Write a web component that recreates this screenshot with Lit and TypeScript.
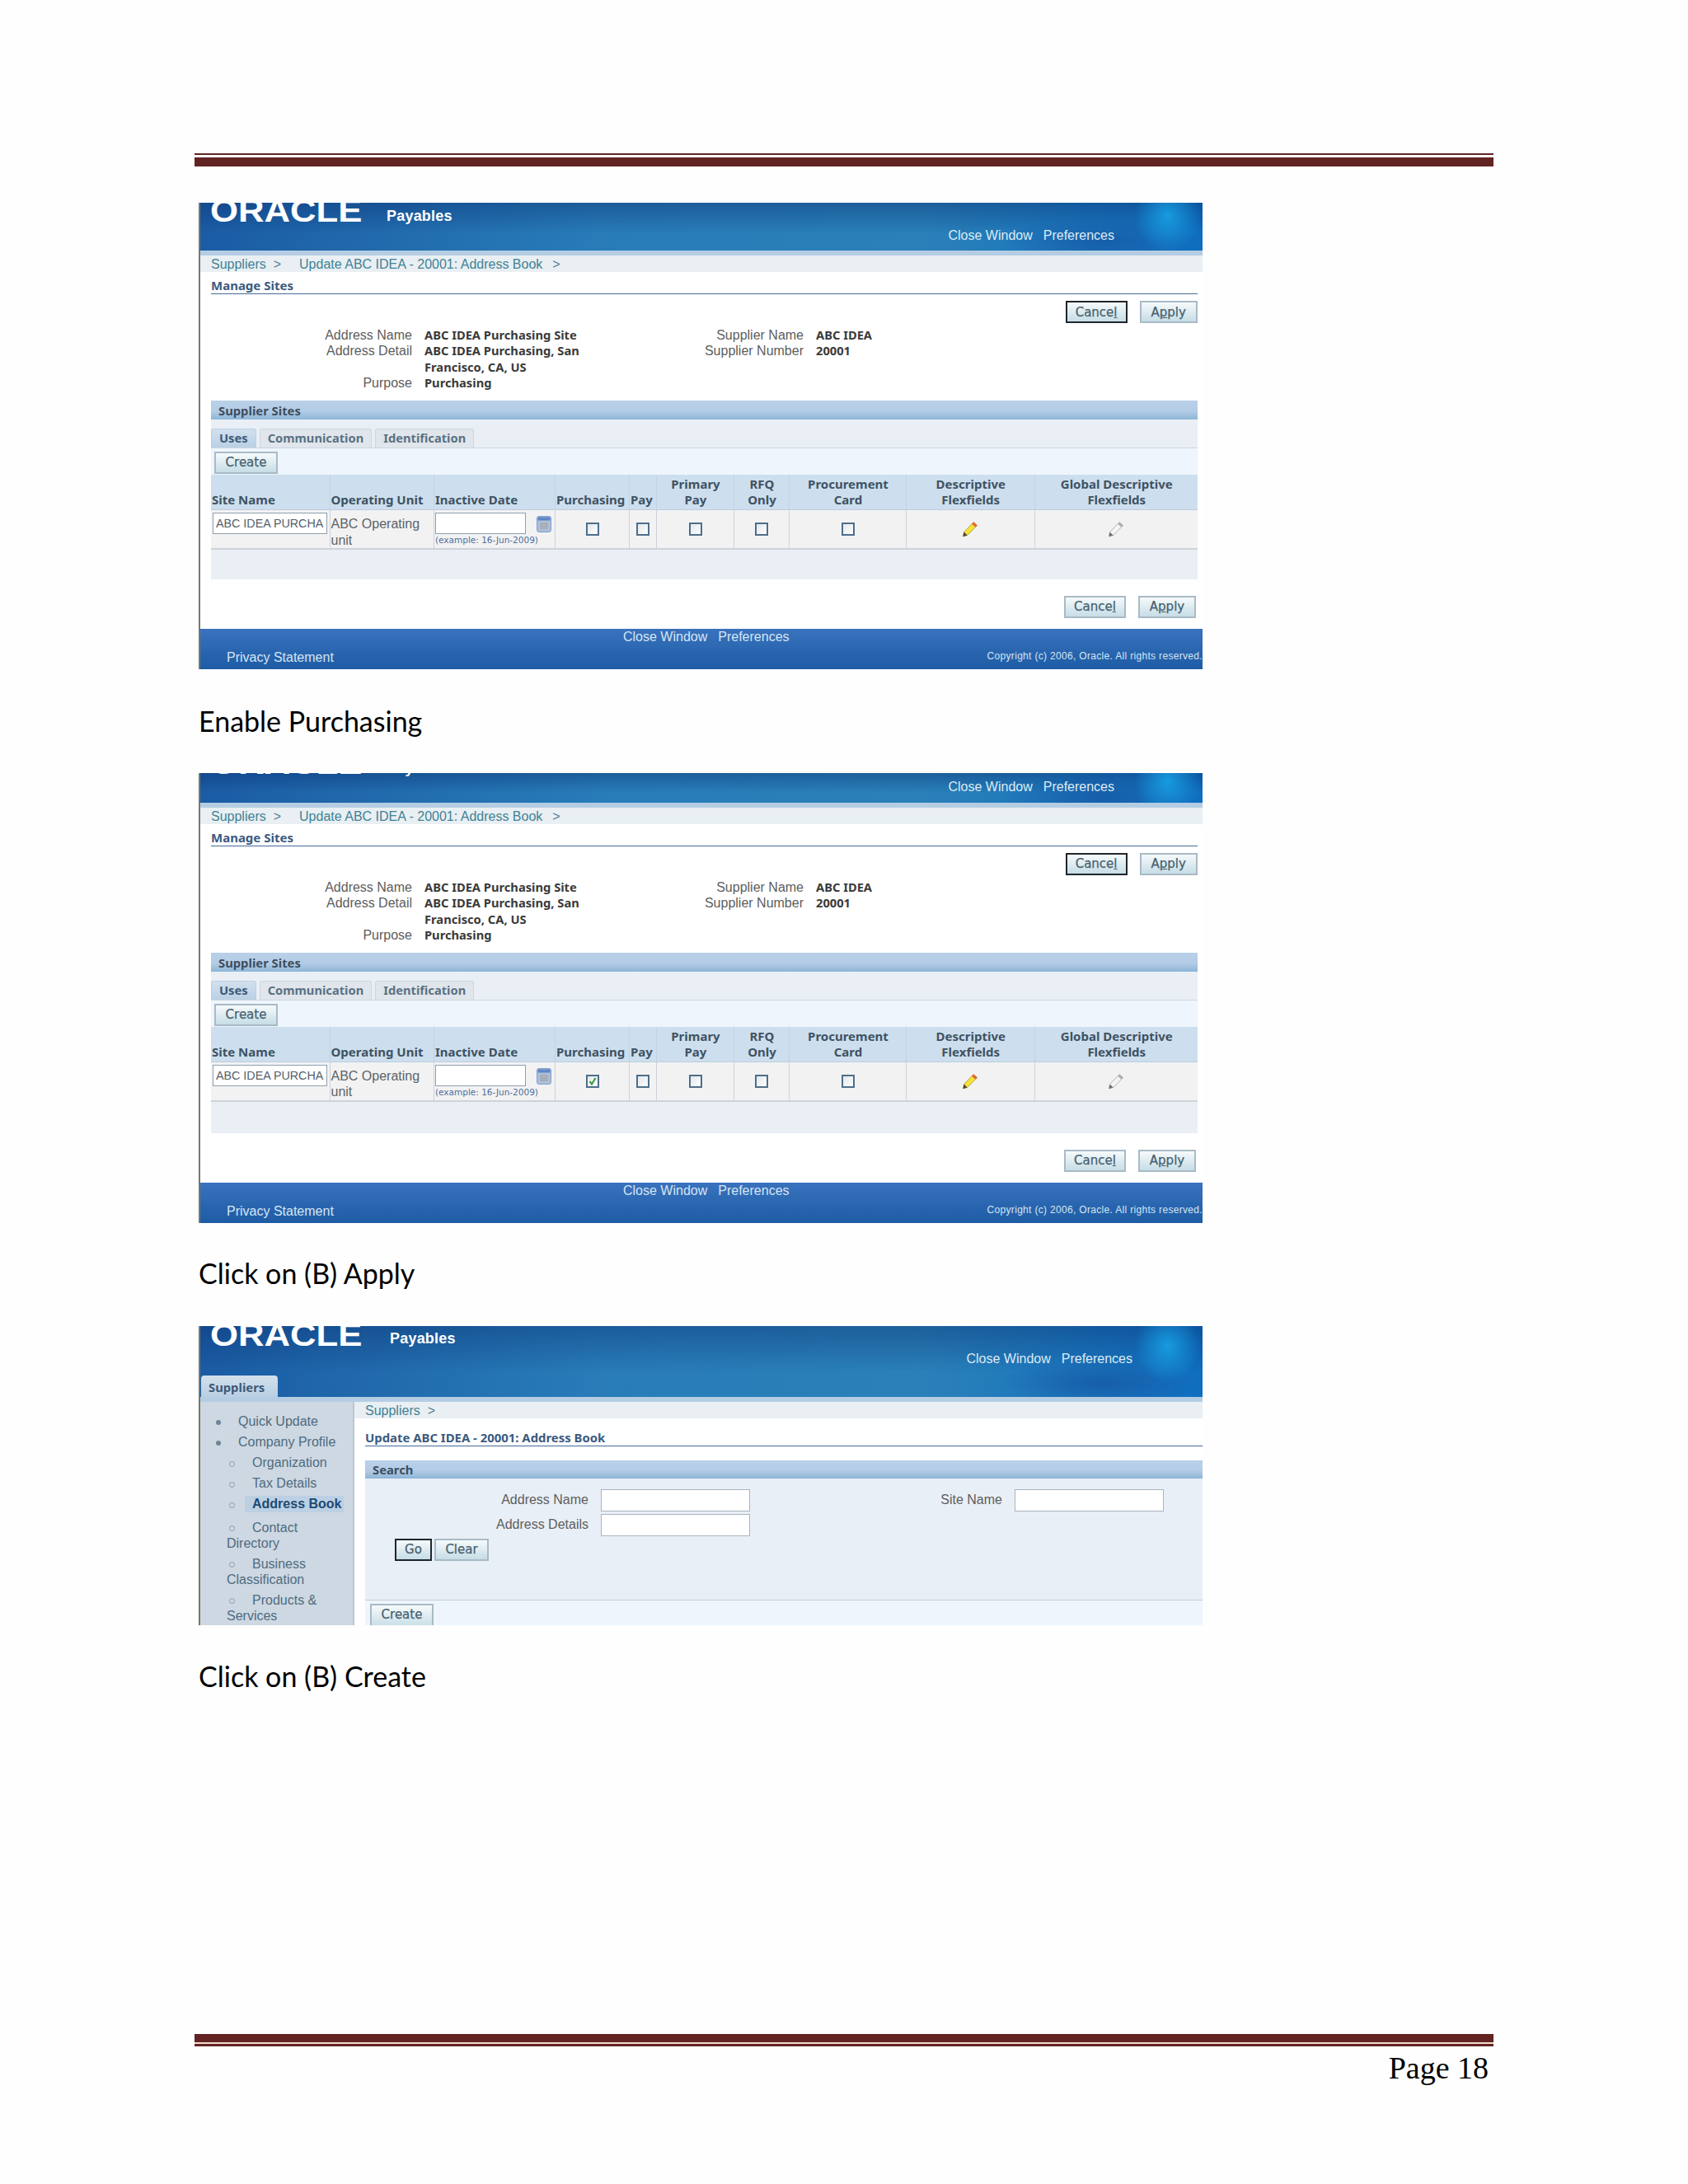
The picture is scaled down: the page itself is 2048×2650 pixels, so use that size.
import { LitElement, html, css, svg } from "lit";
import { customElement } from "lit/decorators.js";

const pencil = (body: string, edge: string, cap: string, tip: string) => html`<svg class="pencil" viewBox="0 0 20 20">
  <path d="M14.2 1.6 L18.6 5.6 L6.6 17.6 L1.4 19 L2.6 13.4 Z" fill="${body}" stroke="${edge}" stroke-width=".8"/>
  <path d="M14.2 1.6 L18.6 5.6 L16.4 7.8 L12 3.8 Z" fill="${cap}"/>
  <path d="M2.6 13.4 L1.4 19 L6.6 17.6 Z" fill="${tip}"/>
</svg>`;

const calendar = html`<svg class="cal" viewBox="0 0 18 20">
  <rect x=".5" y=".5" width="17" height="19" rx="2.5" fill="#a9bfe0" stroke="#7f9fd0"/>
  <rect x="1.5" y="1.5" width="15" height="4" fill="#5f86c4"/>
  <rect x="3" y="7" width="12" height="10" fill="#c6ced8"/>
  ${[9, 11, 13, 15].map((y) => svg`<path d="M3 ${y} H15" stroke="#8b96a3" stroke-width=".7"/>`)}
  ${[5.4, 7.8, 10.2, 12.6].map((x) => svg`<path d="M${x} 7 V17" stroke="#8b96a3" stroke-width=".7"/>`)}
</svg>`;

@customElement("app-root")
export class AppRoot extends LitElement {
  static styles = css`
    :host { display: block; width: 2048px; height: 2650px; background: #fefefe; overflow: hidden; }
    .page { box-sizing: border-box; width: 2048px; height: 2650px; padding: 186px 0 0 236px; font-family: "Liberation Sans", Arial, sans-serif; color: #555; }

    .rule-top, .rule-bot { width: 1576px; }
    .r-thin { height: 2px; background: #622423; }
    .r-thick { height: 11px; background: #622423; }
    .r-gap { height: 3px; background: #fff; }
    .rule-bot .r-thick { height: 10px; }
    .rule-bot .r-gap { height: 2px; background: #f3ddd0; }
    .rule-bot .r-thin { height: 3px; }
    .rule-top { margin-bottom: 44px; }

    .caption { margin-left: 5px; font-family: Lato, sans-serif; font-size: 34px; line-height: 40px; color: #000; }
    .c1 { margin-top: 42.8px; margin-bottom: 43.2px; }
    .c2 { margin-top: 41px; margin-bottom: 44px; }
    .c3 { margin-top: 41.8px; margin-bottom: 414.2px; }
    .pageno { width: 1570px; margin-top: 4px; text-align: right; font-family: "Liberation Serif", serif; font-size: 38px; line-height: 44px; color: #000; }

    .shot { box-sizing: border-box; margin-left: 5px; width: 1218px; border-left: 2px solid #77776c; background: #fff; overflow: hidden; }

    .hdr { display: flex; flex-direction: column; justify-content: flex-end; overflow: hidden; height: 58px;
      background:
        radial-gradient(ellipse 40px 44px at 96.5% 28%, rgba(24,165,232,.85), rgba(24,165,232,0)),
        radial-gradient(ellipse 120px 30px at 90% 80%, rgba(22,84,160,.7), rgba(22,84,160,0)),
        linear-gradient(180deg, rgba(8,45,110,.4), rgba(8,45,110,0) 65%),
        linear-gradient(90deg, #1b5ca4 0%, #287cb8 40%, #2a80b8 72%, #0f6ec0 100%); }
    .hdr.short { height: 36px; }
    .hdr.tall { height: 86px; }
    .hdr-row { display: flex; align-items: flex-end; flex: none; }
    .logo { flex: none; margin: 0 24px 29px 12px; font: 700 39px/39px "Liberation Sans", sans-serif; color: #fff; transform: scaleX(1.12); transform-origin: left bottom; width: 160px; white-space: nowrap; }
    .logo sup { font-size: 8px; font-weight: 400; line-height: 0; vertical-align: 24px; margin-left: 1px; }
    .pay { flex: none; margin: 0 0 32px 30px; font: 700 18px/20px "Liberation Sans", sans-serif; color: #fff; letter-spacing: .2px; }
    .links { display: flex; gap: 13px; margin: 0 107px 8.5px auto; font-size: 16px; line-height: 20px; color: #dcebf5; }
    .tall .logo { margin-bottom: 30px; }
    .tall .pay { margin: 0 0 35px 34px; }
    .tall .links { margin: 0 85px 9.5px auto; }
    .hdr-tab { flex: none; height: 26px; }
    .tab-top { box-sizing: border-box; width: 93px; height: 26px; margin-left: 1px; padding: 4px 0 0 9px; border-radius: 4px 4px 0 0; background: linear-gradient(#d3e0ec, #b9cfe4); font: 700 14.8px/20px "Noto Sans", sans-serif; color: #3d5a76; }

    .band { height: 6px; background: #b5cde3; }
    .crumb { box-sizing: border-box; display: flex; height: 20px; padding: 1px 0 0 13px; background: #e9eff3; font-size: 16px; line-height: 20px; color: #3f8294; }
    .sep { margin: 0 22px 0 9px; color: #55788c; }
    .sep.end { margin-left: 12px; }
    .title { box-sizing: border-box; height: 27px; margin: 0 6px 0 13px; padding-top: 6.2px; border-bottom: 1.5px solid #466a96; font: 700 15px/20px "Noto Sans", sans-serif; color: #3b5a80; }
    .actions { display: flex; justify-content: flex-end; gap: 15px; padding-right: 6.4px; margin-top: 8px; }
    .actions.low { padding-right: 8px; margin: 20px 0 13px; }
    .btn { box-sizing: border-box; display: flex; align-items: center; justify-content: center; height: 27px; border: 2px solid #a9bac6; background: linear-gradient(#f6fafb, #c6dde6); font: 400 15px/20px "DejaVu Sans", sans-serif; color: #46616f; -webkit-text-stroke: .25px #46616f; }
    .btn u { text-decoration-thickness: 1px; }
    .btn.def { border-color: #20262b; }
    .w75 { width: 75px; } .w70 { width: 70px; } .w77 { width: 77px; } .w45 { width: 45px; } .w66 { width: 66px; }

    .info { display: grid; grid-template-columns: 257px 240px 205px 1fr; grid-template-rows: 19.6px 39.2px 19.6px; column-gap: 15px; margin-top: 4.65px; line-height: 19.6px; font-size: 16px; align-items: baseline; }
    .lab { text-align: right; color: #5d5d5d; }
    .val { font: 700 14.7px/19.6px "Noto Sans", sans-serif; color: #3a3a3a; }

    .sec { box-sizing: border-box; height: 23px; margin: 10.95px 6px 0 13px; padding: 2px 0 0 9px; background: linear-gradient(#b9d0e8 0%, #b4cce6 55%, #8db5d6 100%); font: 700 14.8px/20px "Noto Sans", sans-serif; color: #3c4e60; }
    .panel { box-sizing: border-box; height: 194px; margin: 0 6px 0 13px; padding-top: 11px; background: #eaeff6; }
    .panel.long { height: 196px; }
    .tabs { display: flex; gap: 4px; height: 23px; }
    .tab { box-sizing: border-box; height: 23px; padding: 1px 9px 0; border: 1px solid #cdd6df; border-bottom: 0; border-radius: 3px 3px 0 0; background: #e0e6ec; font: 700 14.7px/19px "Noto Sans", sans-serif; color: #5a7183; }
    .tab.on { background: linear-gradient(#d2e0ee, #b9d0e6); border-color: #bcd0e4; color: #3d5a76; }
    .tabc { box-sizing: border-box; height: 33px; padding: 4px 0 0 4px; border-top: 1px solid #cdd6de; background: #eef5fd; }

    .tbl { display: grid; grid-template-columns: 143.5px 126.5px 147px 90px 33px 94px 67px 142px 155.5px 198.5px; }
    .th { box-sizing: border-box; height: 43px; display: flex; align-items: flex-end; padding: 0 0 1px 1px; background: #cddfee; border-left: 1px solid #c2d4e4; border-bottom: 1px solid #bccede; font: 700 15px/19.6px "Noto Sans", sans-serif; color: #3f5263; white-space: nowrap; }
    .th:first-child { border-left: 0; }
    .th.ctr { justify-content: center; text-align: center; }
    .td { box-sizing: border-box; height: 48px; display: flex; align-items: center; justify-content: center; background: #f3f2f3; border-left: 1px solid #cdd2d8; border-bottom: 2px solid #ced3d8; }
    .td.first { border-left: 0; }
    .td.top { display: block; padding: 3px 0 0 2px; }
    .td.unit { display: block; padding: 7px 0 0 1px; font-size: 16px; line-height: 19.6px; color: #5b6368; }
    .td.date { display: grid; grid-template-columns: 110px 18px; column-gap: 13px; justify-content: start; align-content: start; padding: 3px 0 0 1px; }
    .inp { box-sizing: border-box; height: 26px; border: 1px solid #8fa0ae; background: #fff; font-size: 14.3px; line-height: 24px; padding-left: 3px; color: #55606a; white-space: nowrap; overflow: hidden; }
    .site { width: 139px; }
    .ex { grid-column: 1 / 3; margin-top: 1px; font: 400 10.5px/13px "DejaVu Sans", sans-serif; color: #4a6fa0; white-space: nowrap; }
    .cal { display: block; width: 18px; height: 20px; margin-top: 2px; }
    .cb { box-sizing: border-box; width: 16px; height: 16px; border: 2px solid #4d6f8c; background: linear-gradient(135deg, #e4e8ec, #fdfdfd); display: block; }
    .pencil { display: block; width: 20px; height: 20px; }
    .cb svg { display: block; width: 12px; height: 12px; }

    .foot { height: 49px; background: linear-gradient(#3a72bd, #1d5ca5); box-sizing: border-box; color: #d5e5f3; font-size: 15px; overflow: hidden; }
    .foot-links { display: flex; gap: 13px; padding-left: 513px; font-size: 16px; line-height: 20px; }
    .foot-row { display: flex; justify-content: space-between; margin-top: 5px; padding-left: 32px; font-size: 16px; line-height: 20px; }
    .copy { flex: none; margin-top: -2px; font-size: 12px; letter-spacing: .32px; white-space: nowrap; }

    .body3 { display: flex; height: 271px; }
    .nav { box-sizing: border-box; flex: none; width: 187px; padding-top: 14.5px; background: #cdd8e2; border-right: 2px solid #bac7d3; font-size: 16px; line-height: 19px; color: #4f6b80; }
    .it { margin-bottom: 6px; }
    .l1 { padding-left: 19px; }
    .l2 { padding-left: 32px; padding-right: 10px; }
    .blt { display: inline-block; vertical-align: middle; }
    .b1 { width: 27px; }
    .b2 { width: 31px; }
    .b3 { width: 22px; }
    .blt i { display: block; width: 6px; height: 6px; border-radius: 50%; background: #6e8499; }
    .b2 i, .b3 i { box-sizing: border-box; width: 7px; height: 7px; margin-left: 3px; background: transparent; border: 1.5px solid #8a9dab; }
    .it.act { margin: 3px 0 8.5px; }
    .hl { display: inline-block; width: 120px; padding: 0 0 1px 9px; box-sizing: border-box; background: #bcd0e4; font-weight: 700; color: #1d4a73; white-space: nowrap; }
    .main3 { flex: 1; min-width: 0; }
    .title3 { box-sizing: border-box; height: 34px; margin-left: 13px; padding-top: 13.2px; border-bottom: 1.5px solid #466a96; font: 700 14.9px/20px "Noto Sans", sans-serif; color: #3b5a80; white-space: nowrap; }
    .sec3 { box-sizing: border-box; height: 22px; margin: 17px 0 0 13px; padding: 1px 0 0 9px; background: linear-gradient(#b9d0e8 0%, #b4cce6 55%, #8db5d6 100%); font: 700 14.8px/20px "Noto Sans", sans-serif; color: #3c4e60; }
    .search { box-sizing: border-box; height: 148px; margin-left: 13px; padding-top: 13px; background: #e9eff6; border-bottom: 1px solid #c6cdd3; }
    .sgrid { display: grid; grid-template-columns: 271px 181px 291px 181px; column-gap: 15px; row-gap: 3px; align-items: center; font-size: 16px; }
    .sgrid .inp { height: 27px; border: 1.5px solid #a9b4bd; }
    .goes { display: flex; gap: 3px; margin: 3px 0 0 36px; }
    .createbar { box-sizing: border-box; height: 30px; margin-left: 13px; padding: 4px 0 0 6px; background: #eef5fd; overflow: hidden; }
    .createbar .btn { height: 30px; align-items: flex-start; padding-top: 1px; }
  `;

  private manage(short: boolean, checked: boolean) {
    const cb = (on = false) => html`<span class="cb">${on
      ? html`<svg viewBox="0 0 12 12"><path d="M2.5 6 L5 9.5 L9.5 2" fill="none" stroke="#2e9a36" stroke-width="2"/></svg>`
      : ""}</span>`;
    return html`<div class="shot">
      <div class="hdr ${short ? "short" : ""}">
        <div class="hdr-row">
          <div class="logo">ORACLE<sup>®</sup></div>
          <div class="pay">Payables</div>
          <div class="links"><span>Close Window</span><span>Preferences</span></div>
        </div>
      </div>
      <div class="band"></div>
      <div class="crumb"><span>Suppliers</span><span class="sep">&gt;</span><span>Update ABC IDEA - 20001: Address Book</span><span class="sep end">&gt;</span></div>
      <div class="title">Manage Sites</div>
      <div class="actions">
        <div class="btn def w75"><span>Cance<u>l</u></span></div>
        <div class="btn w70"><span>A<u>p</u>ply</span></div>
      </div>
      <div class="info">
        <div class="lab">Address Name</div><div class="val">ABC IDEA Purchasing Site</div>
        <div class="lab">Supplier Name</div><div class="val">ABC IDEA</div>
        <div class="lab">Address Detail</div><div class="val">ABC IDEA Purchasing, San<br />Francisco, CA, US</div>
        <div class="lab">Supplier Number</div><div class="val">20001</div>
        <div class="lab">Purpose</div><div class="val">Purchasing</div>
      </div>
      <div class="sec">Supplier Sites</div>
      <div class="panel ${short ? "long" : ""}">
        <div class="tabs"><div class="tab on">Uses</div><div class="tab">Communication</div><div class="tab">Identification</div></div>
        <div class="tabc"><div class="btn w77"><span>Create</span></div></div>
        <div class="tbl">
          <div class="th">Site Name</div>
          <div class="th">Operating Unit</div>
          <div class="th">Inactive Date</div>
          <div class="th">Purchasing</div>
          <div class="th">Pay</div>
          <div class="th ctr"><span>Primary<br />Pay</span></div>
          <div class="th ctr"><span>RFQ<br />Only</span></div>
          <div class="th ctr"><span>Procurement<br />Card</span></div>
          <div class="th ctr"><span>Descriptive<br />Flexfields</span></div>
          <div class="th ctr"><span>Global Descriptive<br />Flexfields</span></div>

          <div class="td first top"><div class="inp site">ABC IDEA PURCHA</div></div>
          <div class="td unit">ABC Operating<br />unit</div>
          <div class="td date"><div class="inp"></div>${calendar}<div class="ex">(example: 16-Jun-2009)</div></div>
          <div class="td">${cb(checked)}</div>
          <div class="td">${cb()}</div>
          <div class="td">${cb()}</div>
          <div class="td">${cb()}</div>
          <div class="td">${cb()}</div>
          <div class="td">${pencil("#f2e23c", "#a8982a", "#e8663c", "#4a4a3a")}</div>
          <div class="td">${pencil("#f4f4f4", "#a3a3a3", "#b0b0b0", "#707070")}</div>
        </div>
      </div>
      <div class="actions low">
        <div class="btn w75"><span>Cance<u>l</u></span></div>
        <div class="btn w70"><span>A<u>p</u>ply</span></div>
      </div>
      <div class="foot">
        <div class="foot-links"><span>Close Window</span><span>Preferences</span></div>
        <div class="foot-row"><span>Privacy Statement</span><span class="copy">Copyright (c) 2006, Oracle. All rights reserved.</span></div>
      </div>
    </div>`;
  }

  private addressBook() {
    return html`<div class="shot">
      <div class="hdr tall">
        <div class="hdr-row">
          <div class="logo">ORACLE<sup>®</sup></div>
          <div class="pay">Payables</div>
          <div class="links"><span>Close Window</span><span>Preferences</span></div>
        </div>
        <div class="hdr-tab"><div class="tab-top">Suppliers</div></div>
      </div>
      <div class="band"></div>
      <div class="body3">
        <div class="nav">
          <div class="it l1"><span class="blt b1"><i></i></span>Quick Update</div>
          <div class="it l1"><span class="blt b1"><i></i></span>Company Profile</div>
          <div class="it l2"><span class="blt b2"><i></i></span>Organization</div>
          <div class="it l2"><span class="blt b2"><i></i></span>Tax Details</div>
          <div class="it l2 act"><span class="blt b3"><i></i></span><span class="hl">Address Book</span></div>
          <div class="it l2"><span class="blt b2"><i></i></span>Contact Directory</div>
          <div class="it l2"><span class="blt b2"><i></i></span>Business Classification</div>
          <div class="it l2"><span class="blt b2"><i></i></span>Products &amp; Services</div>
        </div>
        <div class="main3">
          <div class="crumb"><span>Suppliers</span><span class="sep">&gt;</span></div>
          <div class="title3">Update ABC IDEA - 20001: Address Book</div>
          <div class="sec3">Search</div>
          <div class="search">
            <div class="sgrid">
              <div class="lab">Address Name</div><div class="inp"></div>
              <div class="lab">Site Name</div><div class="inp"></div>
              <div class="lab">Address Details</div><div class="inp"></div>
            </div>
            <div class="goes">
              <div class="btn def w45">Go</div>
              <div class="btn w66">Clear</div>
            </div>
          </div>
          <div class="createbar"><div class="btn w77"><span>Create</span></div></div>
        </div>
      </div>
    </div>`;
  }

  render() {
    return html`<div class="page">
      <div class="rule-top"><div class="r-thin"></div><div class="r-gap"></div><div class="r-thick"></div></div>
      ${this.manage(false, false)}
      <div class="caption c1">Enable Purchasing</div>
      ${this.manage(true, true)}
      <div class="caption c2">Click on (B) Apply</div>
      ${this.addressBook()}
      <div class="caption c3">Click on (B) Create</div>
      <div class="rule-bot"><div class="r-thick"></div><div class="r-gap"></div><div class="r-thin"></div></div>
      <div class="pageno">Page 18</div>
    </div>`;
  }
}
